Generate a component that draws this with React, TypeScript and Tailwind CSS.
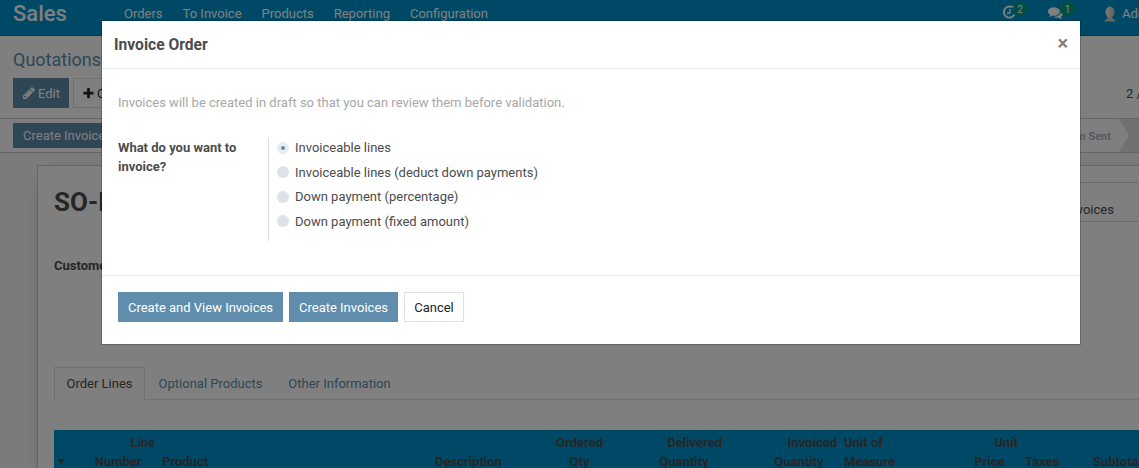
import React from "react";

type Column = { lines: string[]; width: string; numeric?: boolean };

const NAV_ITEMS = ["Orders", "To Invoice", "Products", "Reporting", "Configuration"];

const OPTIONS = [
  "Invoiceable lines",
  "Invoiceable lines (deduct down payments)",
  "Down payment (percentage)",
  "Down payment (fixed amount)",
];

const COLUMNS: Column[] = [
  { lines: ["Line", "Number"], width: "w-[74px]", numeric: true },
  { lines: ["Product"], width: "w-[273px] pl-[7px]" },
  { lines: ["Description"], width: "w-[100px] pl-[7px]" },
  { lines: ["Ordered", "Qty"], width: "w-[75px]", numeric: true },
  { lines: ["Delivered", "Quantity"], width: "w-[119px]", numeric: true },
  { lines: ["Invoiced", "Quantity"], width: "w-[115px]", numeric: true },
  { lines: ["Unit of", "Measure"], width: "w-[82px] pl-[7px]" },
  { lines: ["Unit", "Price"], width: "w-[99px]", numeric: true },
  { lines: ["Taxes"], width: "w-[68px] pl-[7px]" },
  { lines: ["Subtotal"], width: "w-[90px] pl-[7px]" },
];

function PencilIcon() {
  return (
    <svg viewBox="0 0 1792 1792" className="h-[14px] w-[14px] fill-current">
      <path d="M491 1536l91-91-235-235-91 91v107h128v128h107zM1014 608q0-22-22-22-10 0-17 7l-542 542q-7 7-7 17 0 22 22 22 10 0 17-7l542-542q7-7 7-17zM960 416l416 416-832 832h-416v-416zM1643 512q0 53-37 90l-166 166-416-416 166-165q36-38 90-38 53 0 91 38l235 234q37 39 37 91z" />
    </svg>
  );
}

function PlusIcon() {
  return (
    <svg viewBox="0 0 1792 1792" className="h-[13px] w-[13px] fill-current">
      <path d="M1600 736v192q0 40-28 68t-68 28h-416v416q0 40-28 68t-68 28h-192q-40 0-68-28t-28-68v-416h-416q-40 0-68-28t-28-68v-192q0-40 28-68t68-28h416v-416q0-40 28-68t68-28h192q40 0 68 28t28 68v416h416q40 0 68 28t28 68z" />
    </svg>
  );
}

function ActivityIcon() {
  return (
    <svg viewBox="0 0 14 14" className="h-[14px] w-[14px]" fill="none" stroke="currentColor">
      <path d="M8.500 1.700A5.500 5.500 0 1 0 12.200 9.800" strokeWidth="2" />
      <path d="M8 4V8H5" strokeWidth="1.300" />
      <path d="M8 1.700H12.500" strokeWidth="1.600" />
    </svg>
  );
}

function CommentsIcon() {
  return (
    <svg viewBox="0 0 1792 1792" className="h-[15px] w-[15px] fill-current">
      <path d="M1408 768q0 139-94 257t-256.500 186.500-353.500 68.500q-86 0-176-16-124 88-278 128-36 9-86 16h-3q-11 0-20.500-8t-11.500-21q-1-3-1-6.500t.5-6.500 2-6l2.500-5 3.500-5.500 4-5 4.500-5 4-4.500q5-6 23-25t26-29.500 22.500-29 25-38.500 20.500-44q-124-72-195-177t-71-224q0-139 94-257t256.500-186.500 353.500-68.500 353.500 68.500 256.500 186.500 94 257zm384 256q0 120-71 224.500t-195 176.500q10 24 20.500 44t25 38.500 22.500 29 26 29.500 23 25q1 1 4 4.500t4.500 5 4 5 3.500 5.500l2.500 5 2 6 .5 6.500-1 6.500q-3 14-13 22t-22 7q-50-7-86-16-154-40-278-128-90 16-176 16-271 0-472-132 58 4 88 4 161 0 309-45t264-129q125-92 192-212t67-254q0-77-23-152 129 71 204 178t75 230z" />
    </svg>
  );
}

function AvatarIcon() {
  return (
    <svg viewBox="0 0 12 16" className="h-[16px] w-[12px]">
      <defs>
        <linearGradient id="avatar" x1="0" y1="0" x2="1" y2="0">
          <stop offset="0" stopColor="#f4f4f4" />
          <stop offset="1" stopColor="#c4c4c4" />
        </linearGradient>
      </defs>
      <path d="M0.500 15.500C1 12.800 3.500 12.900 4.300 12V10.500H7.700V12C8.500 12.900 11 12.800 11.500 15.500Z" fill="#cccccc" />
      <ellipse cx="6" cy="6.300" rx="4.500" ry="5.800" fill="url(#avatar)" />
    </svg>
  );
}

function NavBar() {
  return (
    <header className="flex h-9 items-start justify-between border-b border-[#00719e] bg-[#0092cc] text-white">
      <div className="flex">
        <span className="w-[124px] pl-[13px] text-[22px] leading-[27px] font-medium">Sales</span>
        <nav className="flex gap-5 leading-[27px]">
          {NAV_ITEMS.map((item) => (
            <span key={item}>{item}</span>
          ))}
        </nav>
      </div>
      <div className="flex w-[137px] shrink-0 pt-[5px]">
        <div className="relative w-[46px] shrink-0">
          <ActivityIcon />
          <span className="absolute -top-[3px] left-[11px] h-[14px] w-[14px] rounded-full bg-[#009f85] text-center text-[10px] leading-[15px]">2</span>
        </div>
        <div className="relative w-[56px] shrink-0">
          <CommentsIcon />
          <span className="absolute -top-[3px] left-[12px] h-[14px] w-[15px] rounded-full bg-[#009f85] text-center text-[10px] leading-[15px]">1</span>
        </div>
        <div className="mt-px flex h-4 shrink-0 items-center gap-[6px] leading-4">
          <AvatarIcon />
          <span>Administrator</span>
        </div>
      </div>
    </header>
  );
}

function ControlPanel() {
  return (
    <section className="flex h-[83px] justify-between border-b border-[#c8cbce] bg-white pl-[13px]">
      <div>
        <h1 className="h-[42px] pt-3 text-[18px] leading-6 text-[#5f8dab]">Quotations</h1>
        <div className="flex gap-1">
          <button className="flex h-[30px] w-14 items-center gap-[2px] bg-[#5f8dab] pl-[9px] text-white">
            <PencilIcon />
            <span className="pt-[2px]">Edit</span>
          </button>
          <button className="flex h-[30px] w-[72px] items-center gap-[2px] border border-[#dee2e6] pl-2 text-[#212529]">
            <PlusIcon />
            <span className="pt-[2px]">Create</span>
          </button>
        </div>
      </div>
      <span className="w-[13px] pt-[48px] leading-[20px] whitespace-nowrap">2 / 2</span>
    </section>
  );
}

function StatusBar() {
  return (
    <section className="flex h-[34px] items-stretch justify-between border-b border-[#c8cbce] bg-white pl-[13px]">
      <button className="my-1 h-[25px] w-[109px] bg-[#5f8dab] text-white">Create Invoices</button>
      <div className="flex w-[139px] items-stretch">
        <span className="w-[119px] pr-2 text-right text-[11px] leading-[35px] font-bold text-[#adb5bd]">
          Quotation Sent
        </span>
        <svg viewBox="0 0 20 33" className="h-[33px] w-5">
          <path d="M0 0H20V33H0L10 16.500Z" fill="#dee2e6" />
        </svg>
      </div>
    </section>
  );
}

function OrderTable() {
  return (
    <div className="mt-[30px] flex h-[60px] w-[1200px] bg-[#0092cc] pt-[3px] font-bold text-[#4c4c4c]">
      <div className="flex w-[27px] items-start pt-[26px] pl-[3px]">
        <svg viewBox="0 0 8 5" className="h-[5px] w-2 fill-current">
          <path d="M0 0H8L4 5Z" />
        </svg>
      </div>
      {COLUMNS.map((column) => (
        <div
          key={column.lines.join(" ")}
          className={`flex h-[38px] shrink-0 flex-col justify-end leading-[19px] ${column.width} ${column.numeric ? "items-end" : ""}`}
        >
          {column.lines.map((line, index) => (
            <span key={line} className={column.numeric && index === 1 ? "pr-[13.500px]" : ""}>
              {line}
            </span>
          ))}
        </div>
      ))}
    </div>
  );
}

function OrderSheet() {
  return (
    <main className="bg-[#f7f7f7] pt-3 pl-[37px]">
      <div className="h-[500px] w-[1300px] border border-[#c8c8d3] bg-white pl-4 shadow-[0_5px_20px_-15px_#000]">
        <div className="flex h-14 justify-between pt-4">
          <h2 className="pt-[2px] text-[26px] leading-[36px] font-bold">SO-D</h2>
          <div className="mr-[198px] h-10 w-[130px] border-y border-[#ced4da] pt-[17px] pl-[58px] leading-[20px]">
            Invoices
          </div>
        </div>
        <p className="mt-[34px] leading-[20px] font-bold">Customer</p>
        <div className="mt-[91px] flex h-[33px] border-b border-[#dee2e6] leading-[33px] text-[#5f8dab]">
          <span className="h-[33px] w-[91px] border border-b-0 border-[#dee2e6] bg-white text-center leading-[31px] text-[#4c4c4c]">
            Order Lines
          </span>
          <span className="w-[131px] text-center">Optional Products</span>
          <span className="w-[127px] text-center">Other Information</span>
        </div>
        <OrderTable />
      </div>
    </main>
  );
}

function InvoiceDialog() {
  return (
    <div className="absolute inset-0 bg-black/50 pt-[21px] pl-[102px]">
      <div
        role="dialog"
        className="h-[323px] w-[978px] bg-white shadow-[0_0_0_1px_rgba(0,0,0,0.2)]"
      >
        <div className="flex h-12 items-center justify-between border-b border-[#e9ecef] pr-3 pl-3">
          <h3 className="pt-[2px] text-[15.600px] font-bold">Invoice Order</h3>
          <button className="-mt-1 text-[20px] leading-5 font-bold text-[#7f7f7f]">×</button>
        </div>
        <div className="h-[206px] px-4 pt-6">
          <p className="leading-[20px] text-[#a8a8a8]">
            Invoices will be created in draft so that you can review them before validation.
          </p>
          <div className="mt-[25px] flex">
            <p className="w-[150px] pr-5 leading-[19px] font-bold">What do you want to invoice?</p>
            <div className="h-[103px] border-l border-[#dcdcdc] pl-2">
              <div className="-mt-[2.500px] flex flex-col">
                {OPTIONS.map((option, index) => (
                  <label key={option} className="flex h-[24.500px] items-center gap-[6px] leading-[19.500px]">
                    <span
                      className={`flex h-3 w-3 items-center justify-center rounded-full ${index === 0 ? "bg-[#e9ecef]" : "bg-[#dee2e6]"}`}
                    >
                      {index === 0 && <span className="h-1 w-1 rounded-full bg-[#5f8dab]" />}
                    </span>
                    {option}
                  </label>
                ))}
              </div>
            </div>
          </div>
        </div>
        <div className="flex gap-[6px] border-t border-[#e9ecef] px-4 pt-4 text-white">
          <button className="h-[30px] w-[165px] bg-[#5f8dab] pt-[2px]">Create and View Invoices</button>
          <button className="h-[30px] w-[109px] bg-[#5f8dab] pt-[2px]">Create Invoices</button>
          <button className="h-[30px] w-[60px] border border-[#dee2e6] pt-[2px] text-[#212529]">Cancel</button>
        </div>
      </div>
    </div>
  );
}

export default function App() {
  return (
    <div className="relative h-[468px] w-[1139px] overflow-hidden bg-white font-[Roboto,sans-serif] text-[13px] text-[#4c4c4c]">
      <NavBar />
      <ControlPanel />
      <StatusBar />
      <OrderSheet />
      <InvoiceDialog />
    </div>
  );
}
